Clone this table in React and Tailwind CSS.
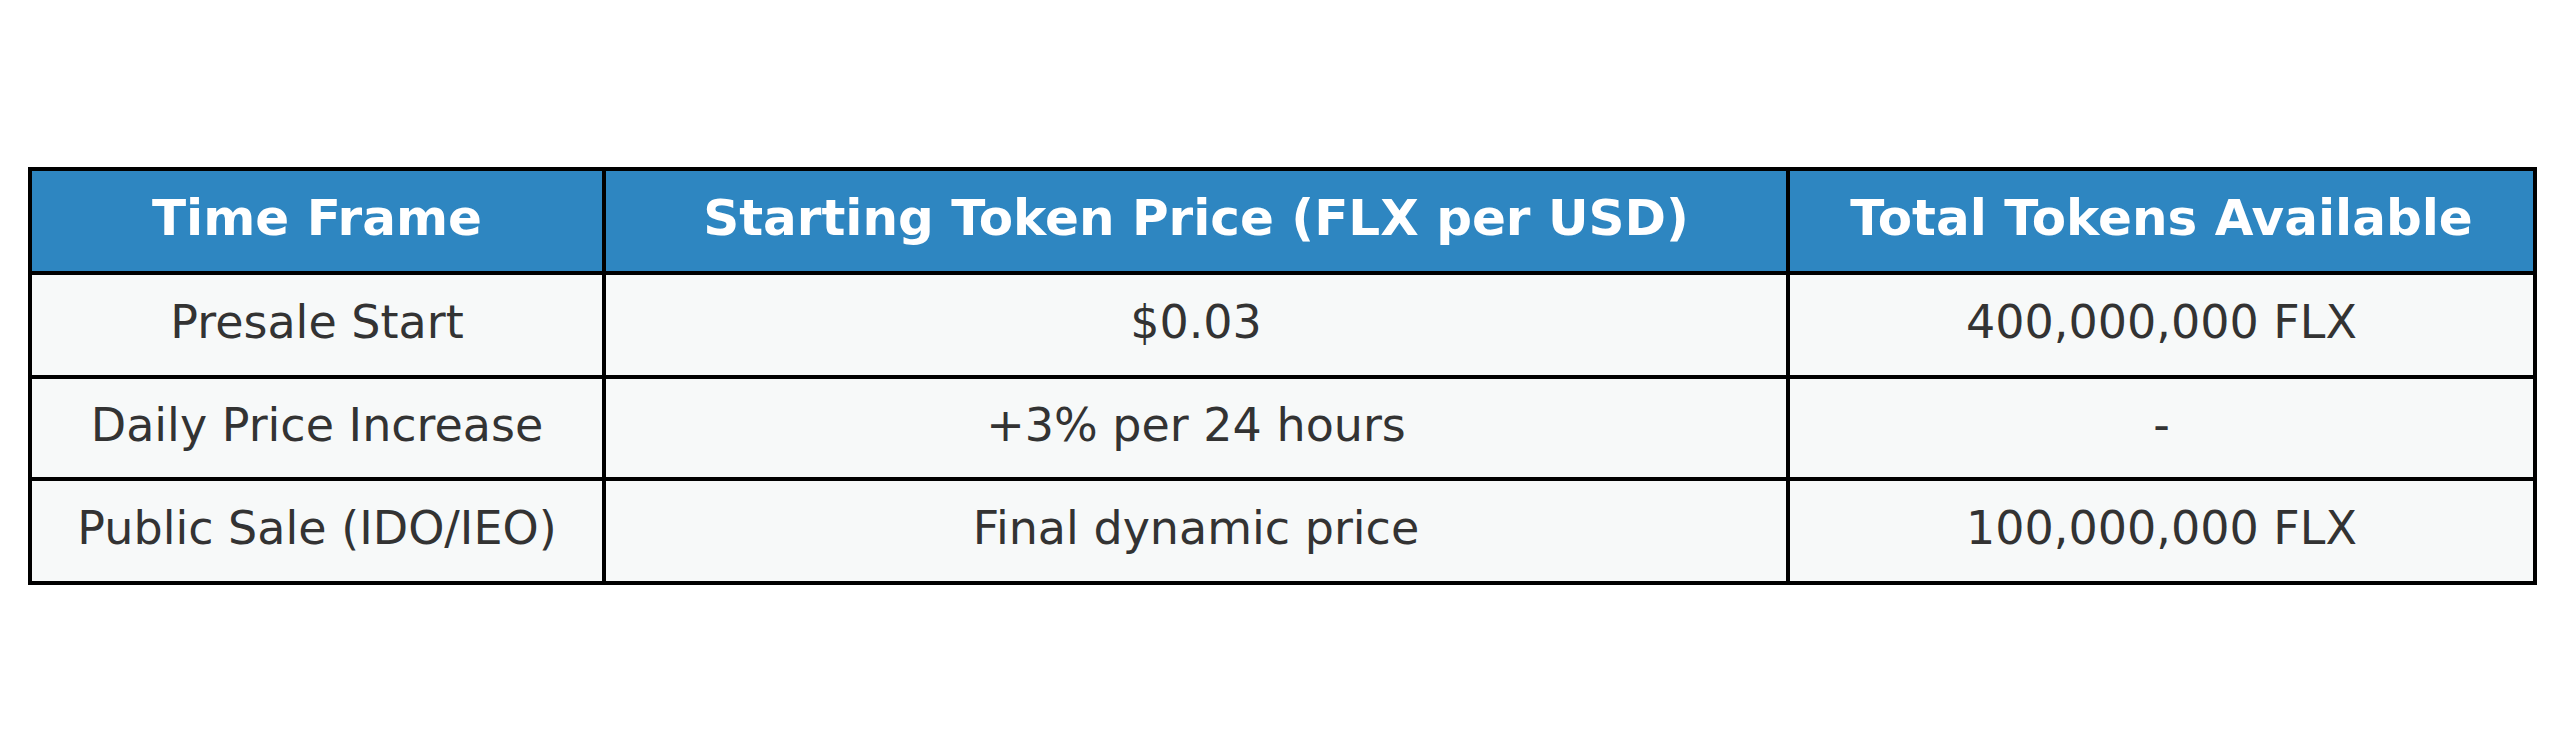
export default function App() {
  const headers = ["Time Frame", "Starting Token Price (FLX per USD)", "Total Tokens Available"];
  const rows = [
    ["Presale Start", "$0.03", "400,000,000 FLX"],
    ["Daily Price Increase", "+3% per 24 hours", "-"],
    ["Public Sale (IDO/IEO)", "Final dynamic price", "100,000,000 FLX"],
  ];
  return (
    <div className="w-[2565px] h-[753px] bg-white pt-[167px] pl-[28px]" style={{ fontFamily: "'DejaVu Sans', sans-serif" }}>
      <div className="w-[2509px] grid grid-cols-[570px_1180px_743px] grid-rows-[100px_100px_98px_100px] gap-[4px] p-[4px] bg-black">
        {headers.map((h) => (
          <div key={h} className="bg-[#2E86C1] flex items-center justify-center text-white font-bold text-[50px] leading-none pb-[6px]">
            {h}
          </div>
        ))}
        {rows.map((r, i) =>
          r.map((c, j) => (
            <div key={i + "-" + j} className="bg-[#F7F9F9] flex items-center justify-center text-[#333333] text-[46px] leading-none pb-[6px]">
              {c}
            </div>
          ))
        )}
      </div>
    </div>
  );
}
